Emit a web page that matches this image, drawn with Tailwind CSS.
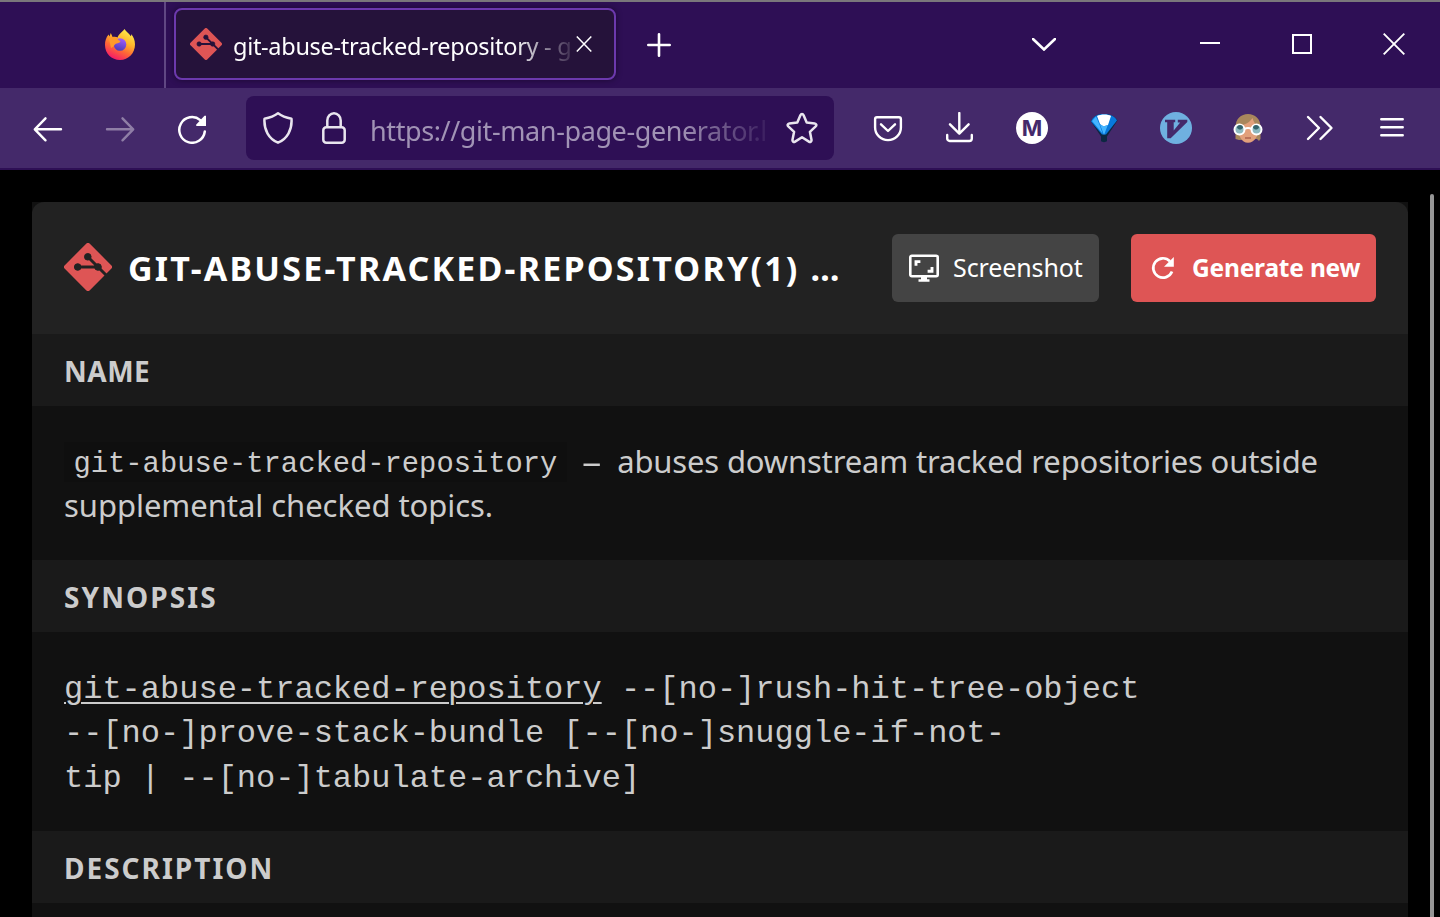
<!DOCTYPE html>
<html lang="en">
<head>
<meta charset="utf-8">
<title>git-abuse-tracked-repository</title>
<script src="https://cdn.jsdelivr.net/npm/@tailwindcss/browser@4"></script>
</head>
<body class="w-[1440px] h-[917px] overflow-hidden bg-black font-['Noto_Sans',sans-serif] text-white">
<div class="flex flex-col h-full">
  <!-- Tab strip -->
  <header class="h-[88px] shrink-0 bg-[#2e0f55] border-t-2 border-[#7a777b] flex items-stretch">
    <div class="w-[166px] border-r-2 border-[#604783] flex items-center pl-[104px]">
      <svg class="size-8" viewBox="0 0 32 32">
        <defs>
          <linearGradient id="fx" x1=".8" y1="0" x2=".3" y2="1"><stop offset="0" stop-color="#fff44f"/><stop offset=".4" stop-color="#ffb32a"/><stop offset=".65" stop-color="#ff6a35"/><stop offset="1" stop-color="#f5156c"/></linearGradient>
          <linearGradient id="fy" x1=".7" y1="0" x2=".4" y2="1"><stop offset="0" stop-color="#a45cff"/><stop offset="1" stop-color="#4a3bb5"/></linearGradient>
        </defs>
        <path fill="url(#fx)" d="M20.500 0c1.200 2.600 4.800 4.500 6.300 7.200.5-.6.500-1.500.3-2.200C29.600 7.500 31 11.500 31 15.500 31 24 24.500 31 16 31S1 24.500 1 16c0-4 1-7.500 3.600-10.500L5.500 7.600 6.800 4l1.800 4c1.700-.4 3.600-.2 5 .4C14.500 5 18 3.500 20.500 0z"/>
        <circle cx="16" cy="15.500" r="6.300" fill="url(#fy)"/>
        <path fill="#ff9a2a" d="M5 9.500c3-2 6-1.800 8.500-.5.2 1.500 1 2.600 3 3-.4 2-2.500 2-4 2.500-1.800.6-2 1.500-3 3L7 19z"/>
      </svg>
    </div>
    <div class="ml-2 mt-[6px] mb-2 w-[442px] rounded-[8px] border-2 border-[#6c39ad] bg-[#25123a] shadow-[0_0_6px_rgba(0,0,0,.45)] flex items-center pl-[14px]">
      <svg class="size-8 shrink-0" viewBox="0 0 48 48"><rect x="6.300" y="6.300" width="35.400" height="35.400" rx="2.600" transform="rotate(45 24 24)" fill="#de5555"/><g fill="#25123a" stroke="#25123a"><path fill="none" stroke-width="3" d="M14 24h20M24 14l20 20"/><circle cx="13.700" cy="24" r="3.300"/><circle cx="23.800" cy="13.800" r="3.300"/><circle cx="34" cy="24" r="3.300"/></g></svg>
      <span class="ml-[11px] mt-[3px] w-[343px] shrink-0 overflow-hidden whitespace-nowrap text-[23.500px] leading-8 tracking-[-0.300px] mask-[linear-gradient(to_right,#000_280px,transparent_346px)]">git-abuse-tracked-repository - g</span>
      <svg class="size-4 shrink-0" viewBox="0 0 16 16" fill="none" stroke="#fff" stroke-width="1.500"><path d="M.8.500l14.500 15M15.300.500L.8 15.500"/></svg>
    </div>
    <div class="flex flex-1 items-center">
      <svg class="ml-[31px] size-6" viewBox="0 0 24 24" stroke="#fff" stroke-width="2.600" stroke-linecap="round"><path d="M1.300 12h21.400M12 1.300v21.400"/></svg>
      <svg class="ml-[361px] -mt-0.5 w-6 h-[13px]" viewBox="0 0 24 13" fill="none" stroke="#fff" stroke-width="2.600" stroke-linecap="round"><path d="M1 1l11 10.500L23 1"/></svg>
      <div class="ml-[144px] w-5 h-0.5 bg-white -mt-[4px]"></div>
      <div class="ml-[72px] -mt-0.5 size-5 border-2 border-white"></div>
      <svg class="ml-[71px] -mt-0.5 size-[22px]" viewBox="0 0 22 22" stroke="#fff" stroke-width="1.900"><path d="M.7.700l20.600 20.600M21.300.700L.7 21.300"/></svg>
    </div>
  </header>
  <!-- Navigation toolbar -->
  <nav class="h-[82px] shrink-0 bg-[#44296a] border-b-2 border-[#2e0f55] flex items-center">
    <svg class="ml-8 size-8 shrink-0" viewBox="0 0 32 32" fill="none" stroke="#fff" stroke-width="2.400" stroke-linecap="round" stroke-linejoin="round"><path d="M29 17.300H3M13.500 6.300L2.800 17.300l10.700 11"/></svg>
    <svg class="ml-10 size-8 shrink-0" viewBox="0 0 32 32" fill="none" stroke="#8f7ea6" stroke-width="2.400" stroke-linecap="round" stroke-linejoin="round"><path d="M3 17.300h26M18.500 6.300l10.700 11-10.700 11"/></svg>
    <svg class="ml-10 size-8 shrink-0" viewBox="0 0 32 32" fill="none" stroke="#fff" stroke-width="2.500" stroke-linecap="round"><path d="M28.800 19.500a12.800 12.800 0 1 1-4.500-11.400"/><path fill="#fff" stroke="none" d="M30 3.800V14H21c-1 0-1.300-.8-.7-1.500l8.200-8.700z"/></svg>
    <div class="ml-[38px] w-[588px] h-16 shrink-0 rounded-[8px] bg-[#2e0f55] flex items-center">
      <svg class="ml-4 size-8 shrink-0" viewBox="0 0 32 32" fill="none" stroke="#e9e5ee" stroke-width="2.500" stroke-linejoin="round"><path d="M16 1.300c3.500 2.600 8.500 4.500 13.500 5.500C30.300 18 25 27 16 30.700 7 27 1.700 18 2.500 6.800 7.500 5.800 12.500 3.900 16 1.300z"/></svg>
      <svg class="ml-6 size-8 shrink-0" viewBox="0 0 32 32" fill="none" stroke="#e9e5ee" stroke-width="2.500"><rect x="5.300" y="15.300" width="21.400" height="15.400" rx="3"/><path d="M9.300 15V8.500a6.700 7.200 0 0 1 13.400 0V15"/></svg>
      <span class="ml-5 w-[404px] shrink-0 overflow-hidden whitespace-nowrap text-[27px] leading-9 tracking-[-0.400px] mt-1.5 text-[#a193b5] mask-[linear-gradient(to_right,#000_310px,transparent_408px)]">https://git-man-page-generator.l</span>
      <svg class="ml-3 size-8 shrink-0" viewBox="0 0 32 32" fill="none" stroke="#e9e5ee" stroke-width="2.500" stroke-linejoin="round"><path d="M14.400 3.200c.7-1.500 2.500-1.500 3.200 0l3.100 7.300 8 .9c1.700.2 2.200 1.900 1 3l-5.800 5.400 1.600 8c.3 1.600-1.200 2.700-2.600 1.800L16 25.300l-6.900 4.300c-1.400.9-2.900-.2-2.600-1.800l1.600-8-5.800-5.400c-1.200-1.100-.7-2.800 1-3l8-.9z"/></svg>
    </div>
    <svg class="ml-[38px] size-8 shrink-0" viewBox="0 0 32 32" fill="none" stroke="#fff" stroke-width="2.400" stroke-linecap="round" stroke-linejoin="round"><path d="M5 5.300h22a1.900 1.900 0 0 1 1.900 1.900v8.300a12.900 12.600 0 0 1-25.800 0V7.200A1.900 1.900 0 0 1 5 5.300z"/><path d="M9 12.300l7 6.700 7-6.700"/></svg>
    <svg class="ml-10 size-8 shrink-0" viewBox="0 0 32 32" fill="none" stroke="#fff" stroke-width="2.400" stroke-linecap="round" stroke-linejoin="round"><path d="M15.300 1v20.500M6 12.300l9.300 9.400 9.300-9.400M3.200 23v3.500a2.500 2.500 0 0 0 2.500 2.500h19.600a2.500 2.500 0 0 0 2.500-2.500V23"/></svg>
    <div class="ml-10 size-8 shrink-0 rounded-full bg-white text-[#44296a] flex items-center justify-center text-[22px] font-bold leading-none font-['Inter',sans-serif]">M</div>
    <svg class="ml-10 size-8 shrink-0" viewBox="0 0 32 32"><path fill="#0c2742" d="M3 9.500C5 4.500 9 2 15.800 2S27 4.500 29.500 8.500L19 24.500V29c-1 1.500-5 1.500-6 0v-4.500z"/><path fill="#0879dc" d="M3 9.500C5 4.500 9 2 15.800 2S27 4.500 29 8.500l-11 14h-4z"/><path fill="#fff" d="M9 4c4-2 11-2 14 0l-3 9-4.500 1.500L12 12z"/><path fill="#45b5ff" d="M4 9l4-4.500 3.500 8 3 9zM12 12.500l3.800 1.700 4-1.200L16 23z"/></svg>
    <svg class="ml-10 size-8 shrink-0" viewBox="0 0 32 32"><circle cx="16" cy="16" r="16" fill="#6fb0e0"/><path fill="#44296a" d="M5 7.800h10.200v2.400h-1.500v8.300l6.500-8h-2.400V7.800h9.500V10L10.700 26.200H7.200v-16H5z"/></svg>
    <svg class="ml-10 size-8 shrink-0" viewBox="0 0 32 32"><path fill="#a8875c" d="M3.500 27V15C3.500 7 9 2 16 2s12.500 5 12.500 13v12l-1.500 2-2-2-18 1z"/><path fill="#e2a07b" d="M6 14c7-1 11-3 14.500-8 1 4 3 7 6.500 8 0 10-4.500 16.700-11 16.700S6 24 6 14z"/><g fill="#8dbac0" stroke="#fff" stroke-width="2"><circle cx="7.500" cy="17.500" r="5"/><circle cx="24.500" cy="17.500" r="5"/><path fill="none" d="M12.500 16.800q3.500-1.500 7 0"/></g><g fill="#35656d"><path d="M5 16a3 3 0 0 1 6 0l-2 1.500H7zM21 16a3 3 0 0 1 6 0l-2 1.500h-2z"/></g><path d="M13 26h6" stroke="#a85b48" stroke-width="1.300"/></svg>
    <svg class="ml-10 size-8 shrink-0" viewBox="0 0 32 32" fill="none" stroke="#fff" stroke-width="2.400" stroke-linecap="round" stroke-linejoin="round"><path d="M4 5l11 11L4 27M16.500 5l11 11-11 11"/></svg>
    <svg class="ml-10 size-8 shrink-0" viewBox="0 0 32 32" stroke="#fff" stroke-width="2.500" stroke-linecap="round"><path d="M5.300 7.300h21.400M5.300 15.300h21.400M5.300 23.300h21.400"/></svg>
  </nav>
  <!-- Page -->
  <div class="flex flex-1 items-start pt-6">
    <main class="ml-8 mt-2 w-[1376px] h-[715px] bg-[#111] text-[#ccc]">
      <div class="h-[132px] rounded-t-[12px] bg-[#222] px-8 flex items-center">
        <svg class="size-12 shrink-0 -mt-0.5" viewBox="0 0 48 48"><rect x="6.300" y="6.300" width="35.400" height="35.400" rx="2.600" transform="rotate(45 24 24)" fill="#de5555"/><g fill="#222" stroke="#222"><path fill="none" stroke-width="3" d="M14 24h20M24 14l20 20"/><circle cx="13.700" cy="24" r="3.300"/><circle cx="23.800" cy="13.800" r="3.300"/><circle cx="34" cy="24" r="3.300"/></g></svg>
        <h1 class="ml-4 w-[764px] shrink-0 whitespace-nowrap text-[34px] leading-10 font-bold tracking-[2.200px] text-white">GIT-ABUSE-TRACKED-REPOSITORY(1) …</h1>
        <button class="w-[207px] h-[68px] shrink-0 rounded-[6px] bg-[#444] text-white flex items-center text-[25px] tracking-[-0.100px]">
          <svg class="ml-4 size-8 shrink-0" viewBox="0 0 32 32" fill="none" stroke="#fff" stroke-width="2.600"><rect x="2.300" y="3.800" width="27.400" height="20.400" rx="1.500"/><path d="M8 13.800V9.600h4.400M24 15v4.200h-4.400" stroke-width="2.900"/><path fill="#fff" stroke="none" d="M13 25h6v2.300h2.500v2.500h-11v-2.500H13z"/></svg>
          <span class="ml-[13px] whitespace-nowrap">Screenshot</span>
        </button>
        <button class="ml-8 w-[245px] h-[68px] shrink-0 rounded-[6px] bg-[#de5555] text-white flex items-center text-[24.500px] tracking-[-0.200px] font-bold">
          <svg class="ml-4 size-8 shrink-0" viewBox="0 0 32 32"><path fill="none" stroke="#fff" stroke-width="2.700" d="M25 19.500a9.700 9.700 0 1 1-2-10.200"/><path fill="#fff" d="M26.800 5v9.700H17z"/></svg>
          <span class="ml-[13px] mt-px whitespace-nowrap">Generate new</span>
        </button>
      </div>
      <h2 class="h-[72px] bg-[#1a1a1a] px-8 pt-px flex items-center text-[28px] font-bold tracking-[0.500px]">NAME</h2>
      <div class="h-[154px] px-8 pt-[33px] text-[31px] leading-[44px] tracking-[-0.170px] whitespace-nowrap">
        <div class="h-11 flex items-center"><code class="h-10 mt-0.5 leading-[46px] bg-[#0f0f0f] px-[9.500px] text-[28.800px] tracking-normal font-['Liberation_Mono',monospace]">git-abuse-tracked-repository</code><span class="ml-[17px] scale-x-125">–</span><span class="ml-[18px]">abuses downstream tracked repositories outside</span></div>
        <div class="h-11 tracking-[-0.050px]">supplemental checked topics.</div>
      </div>
      <h2 class="h-[72px] bg-[#1a1a1a] px-8 pt-px flex items-center text-[28px] font-bold tracking-[2.100px]">SYNOPSIS</h2>
      <p class="h-[199px] px-8 pt-9 text-[32px] leading-[44.400px] whitespace-pre font-['Liberation_Mono',monospace]"><span class="underline decoration-2 underline-offset-4">git-abuse-tracked-repository</span> --[no-]rush-hit-tree-object
--[no-]prove-stack-bundle [--[no-]snuggle-if-not-
tip | --[no-]tabulate-archive]</p>
      <h2 class="h-[72px] bg-[#1a1a1a] px-8 pt-px flex items-center text-[28px] font-bold tracking-[2px]">DESCRIPTION</h2>
    </main>
    <div class="ml-[22px] h-[723px] w-1 rounded-t-full bg-[#959595]"></div>
  </div>
</div>
</body>
</html>
